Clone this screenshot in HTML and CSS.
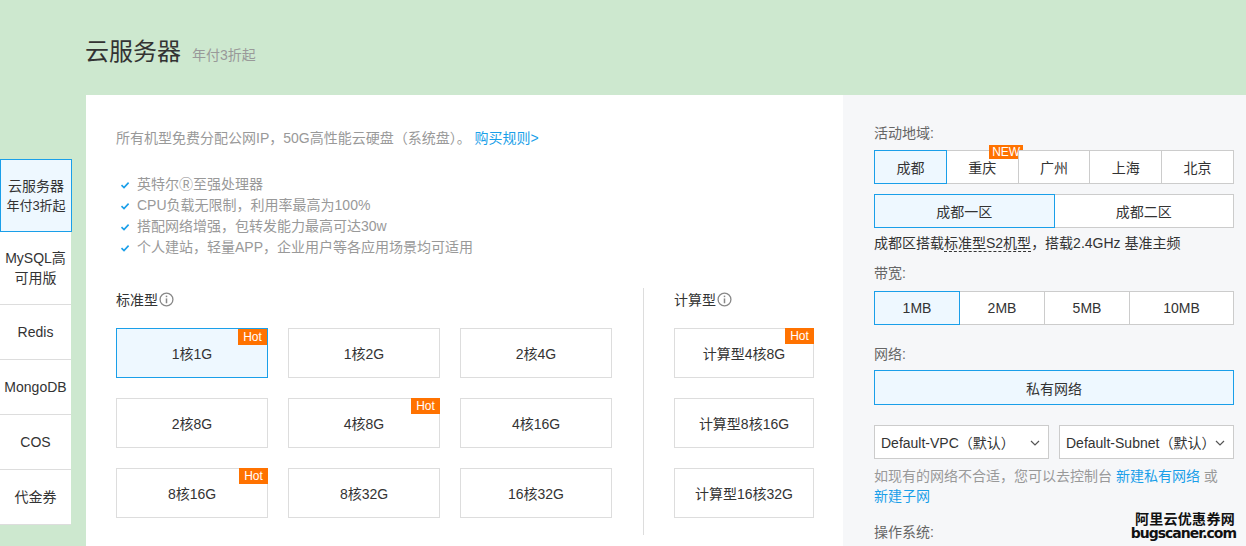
FILE: index.html
```html
<!DOCTYPE html>
<html lang="zh-CN">
<head>
<meta charset="utf-8">
<title>云服务器</title>
<link rel="stylesheet" href="styles.css">
</head>
<body>
<header class="head">
  <h1 class="title">云服务器</h1>
  <span class="subtitle">年付3折起</span>
</header>
<div class="main">
  <nav class="tabs">
    <div class="tab active"><span>云服务器</span><span class="small">年付3折起</span></div>
    <div class="tab tall"><span>MySQL高</span><span>可用版</span></div>
    <div class="tab">Redis</div>
    <div class="tab">MongoDB</div>
    <div class="tab">COS</div>
    <div class="tab">代金券</div>
  </nav>
  <section class="content">
    <p class="intro">所有机型免费分配公网IP，50G高性能云硬盘（系统盘）。 <a class="link">购买规则&gt;</a></p>
    <ul class="features">
      <li><svg class="check" viewBox="0 0 10 10"><path d="M1.5 5.2 L4 7.6 L8.6 2.6" fill="none" stroke="#1a9fe9" stroke-width="1.6"/></svg>英特尔Ⓡ至强处理器</li>
      <li><svg class="check" viewBox="0 0 10 10"><path d="M1.5 5.2 L4 7.6 L8.6 2.6" fill="none" stroke="#1a9fe9" stroke-width="1.6"/></svg>CPU负载无限制，利用率最高为100%</li>
      <li><svg class="check" viewBox="0 0 10 10"><path d="M1.5 5.2 L4 7.6 L8.6 2.6" fill="none" stroke="#1a9fe9" stroke-width="1.6"/></svg>搭配网络增强，包转发能力最高可达30w</li>
      <li><svg class="check" viewBox="0 0 10 10"><path d="M1.5 5.2 L4 7.6 L8.6 2.6" fill="none" stroke="#1a9fe9" stroke-width="1.6"/></svg>个人建站，轻量APP，企业用户等各应用场景均可适用</li>
    </ul>
    <div class="types">
      <div class="group std">
        <div class="gtitle">标准型<svg class="info" viewBox="0 0 14 14"><circle cx="7" cy="7" r="6" fill="none" stroke="#888" stroke-width="1.2"/><rect x="6.3" y="6" width="1.4" height="4.5" fill="#888"/><rect x="6.3" y="3.4" width="1.4" height="1.4" fill="#888"/></svg></div>
        <div class="grid">
          <div class="card active">1核1G<span class="hot">Hot</span></div>
          <div class="card">1核2G</div>
          <div class="card">2核4G</div>
          <div class="card">2核8G</div>
          <div class="card">4核8G<span class="hot">Hot</span></div>
          <div class="card">4核16G</div>
          <div class="card">8核16G<span class="hot">Hot</span></div>
          <div class="card">8核32G</div>
          <div class="card">16核32G</div>
        </div>
      </div>
      <div class="divider"></div>
      <div class="group cmp">
        <div class="gtitle">计算型<svg class="info" viewBox="0 0 14 14"><circle cx="7" cy="7" r="6" fill="none" stroke="#888" stroke-width="1.2"/><rect x="6.3" y="6" width="1.4" height="4.5" fill="#888"/><rect x="6.3" y="3.4" width="1.4" height="1.4" fill="#888"/></svg></div>
        <div class="grid one">
          <div class="card">计算型4核8G<span class="hot">Hot</span></div>
          <div class="card">计算型8核16G</div>
          <div class="card">计算型16核32G</div>
        </div>
      </div>
    </div>
  </section>
  <aside class="side">
    <div class="label">活动地域:</div>
    <div class="seg regions">
      <div class="opt active">成都</div>
      <div class="opt">重庆<span class="new">NEW</span></div>
      <div class="opt">广州</div>
      <div class="opt">上海</div>
      <div class="opt">北京</div>
    </div>
    <div class="seg zones">
      <div class="opt active">成都一区</div>
      <div class="opt">成都二区</div>
    </div>
    <p class="desc">成都区搭载<span class="dotted">标准型S2机型</span>，搭载2.4GHz 基准主频</p>
    <div class="label">带宽:</div>
    <div class="seg bw">
      <div class="opt active w85">1MB</div>
      <div class="opt w85">2MB</div>
      <div class="opt w85">5MB</div>
      <div class="opt grow">10MB</div>
    </div>
    <div class="label net">网络:</div>
    <div class="seg netseg">
      <div class="opt active full">私有网络</div>
    </div>
    <div class="selects">
      <div class="select">Default-VPC（默认）<svg class="chev" viewBox="0 0 10 6"><path d="M1 1 L5 5 L9 1" fill="none" stroke="#555" stroke-width="1.2"/></svg></div>
      <div class="select">Default-Subnet（默认）<svg class="chev" viewBox="0 0 10 6"><path d="M1 1 L5 5 L9 1" fill="none" stroke="#555" stroke-width="1.2"/></svg></div>
    </div>
    <p class="help">如现有的网络不合适，您可以去控制台 <a class="link">新建私有网络</a> 或 <a class="link">新建子网</a></p>
    <div class="label os">操作系统:</div>
    <div class="watermark"><span class="wm-cn">阿里云优惠券网</span><span class="wm-en">bugscaner.com</span></div>
  </aside>
</div>
</body>
</html>
```
FILE: styles.css
```css
* { box-sizing: border-box; }
html, body { margin: 0; padding: 0; }
body {
  background: #cde8cf;
  font-family: "Liberation Sans", "Noto Sans CJK SC", sans-serif;
  font-size: 14px;
  color: #333;
  width: 1246px;
  height: 546px;
  overflow: hidden;
}
.head {
  height: 95px;
  padding-left: 85px;
  display: flex;
  align-items: baseline;
  padding-top: 34px;
}
.title {
  margin: 0;
  font-size: 24px;
  font-weight: normal;
  color: #333;
  line-height: 36px;
}
.subtitle {
  margin-left: 11px;
  font-size: 14px;
  color: #999;
}
.main {
  display: flex;
  height: 451px;
}
.tabs {
  width: 86px;
  padding-top: 64px;
  display: flex;
  flex-direction: column;
}
.tab {
  width: 71px;
  height: 55px;
  background: #fff;
  border-bottom: 1px solid #ddd;
  display: flex;
  flex-direction: column;
  align-items: center;
  justify-content: center;
  font-size: 14px;
  color: #333;
  line-height: 20px;
}
.tab.active {
  width: 72px;
  height: 73px;
  background: #eef8ff;
  border: 1px solid #1a9fe9;
}
.tab.active .small { font-size: 13px; }
.tab.tall { height: 73px; }
.content {
  width: 757px;
  background: #fff;
  padding: 31px 0 0 30px;
}
.intro {
  margin: 0;
  color: #999;
  line-height: 24px;
}
.link { color: #1a9fe9; text-decoration: none; }
.features {
  list-style: none;
  margin: 24px 0 0;
  padding: 0 0 0 4px;
  color: #999;
}
.features li {
  height: 21px;
  line-height: 21px;
  display: flex;
  align-items: center;
}
.check { width: 10px; height: 10px; margin-right: 7px; }
.types {
  display: flex;
  margin-top: 31px;
}
.gtitle {
  display: flex;
  align-items: center;
  height: 20px;
  color: #333;
}
.info { width: 15px; height: 15px; margin-left: 1px; }
.grid {
  margin-top: 19px;
  display: grid;
  grid-template-columns: repeat(3, 152px);
  grid-auto-rows: 50px;
  gap: 20px;
}
.grid.one { grid-template-columns: 140px; }
.card {
  position: relative;
  border: 1px solid #ddd;
  background: #fff;
  display: flex;
  align-items: center;
  justify-content: center;
  color: #333;
}
.card.active { background: #eef8ff; border-color: #1a9fe9; }
.hot {
  position: absolute;
  top: 0;
  right: 0;
  width: 29px;
  height: 16px;
  background: #ff7200;
  color: #fff;
  font-size: 12px;
  line-height: 16px;
  text-align: center;
}
.card:not(.active) .hot { top: -1px; right: -1px; }
.divider {
  width: 1px;
  height: 247px;
  background: #ddd;
  margin: -1px 30px 0 31px;
}
.side {
  position: relative;
  width: 403px;
  background: #f6f7f9;
  padding: 28px 12px 0 31px;
}
.label {
  color: #666;
  line-height: 20px;
  height: 20px;
}
.seg {
  display: flex;
  margin-top: 7px;
}
.opt {
  position: relative;
  flex: 1;
  height: 34px;
  border: 1px solid #ccc;
  margin-left: -1px;
  background: #fff;
  display: flex;
  align-items: center;
  justify-content: center;
  color: #333;
}
.opt:first-child { margin-left: 0; }
.opt.active { background: #eef8ff; border-color: #1a9fe9; z-index: 1; }
.zones { margin-top: 10px; }
.new {
  position: absolute;
  top: -6px;
  left: calc(50% + 24px);
  transform: translateX(-50%);
  background: #ff7200;
  color: #fff;
  font-size: 12px;
  line-height: 14px;
  padding: 0 3px;
}
.desc {
  margin: 5px 0 0;
  line-height: 20px;
  color: #333;
}
.dotted { border-bottom: 1px dashed #333; }
.desc + .label { margin-top: 10px; }
.bw { margin-top: 8px; }
.w85 { flex: 0 0 86px; }
.grow { flex: 1; }
.net { margin-top: 19px; }
.netseg { margin-top: 6px; }
.full { height: 35px; }
.selects {
  display: flex;
  gap: 10px;
  margin-top: 20px;
}
.select {
  position: relative;
  width: 175px;
  height: 34px;
  border: 1px solid #ccc;
  background: #fff;
  display: flex;
  align-items: center;
  padding-left: 6px;
  color: #333;
  white-space: nowrap;
}
.chev {
  position: absolute;
  right: 8px;
  top: 14px;
  width: 10px;
  height: 6px;
}
.help {
  margin: 7px 0 0;
  color: #999;
  line-height: 20px;
}
.os { margin-top: 16px; }
.watermark {
  position: absolute;
  right: 10px;
  bottom: 5px;
  display: flex;
  flex-direction: column;
  align-items: flex-end;
  font-weight: bold;
  color: #111;
  font-family: "DejaVu Sans", "Noto Sans CJK SC", sans-serif;
}
.wm-cn { font-size: 14px; line-height: 14px; letter-spacing: 0.3px; margin-right: 1px; }
.wm-en { font-size: 14px; line-height: 15px; letter-spacing: -1px; }
```
